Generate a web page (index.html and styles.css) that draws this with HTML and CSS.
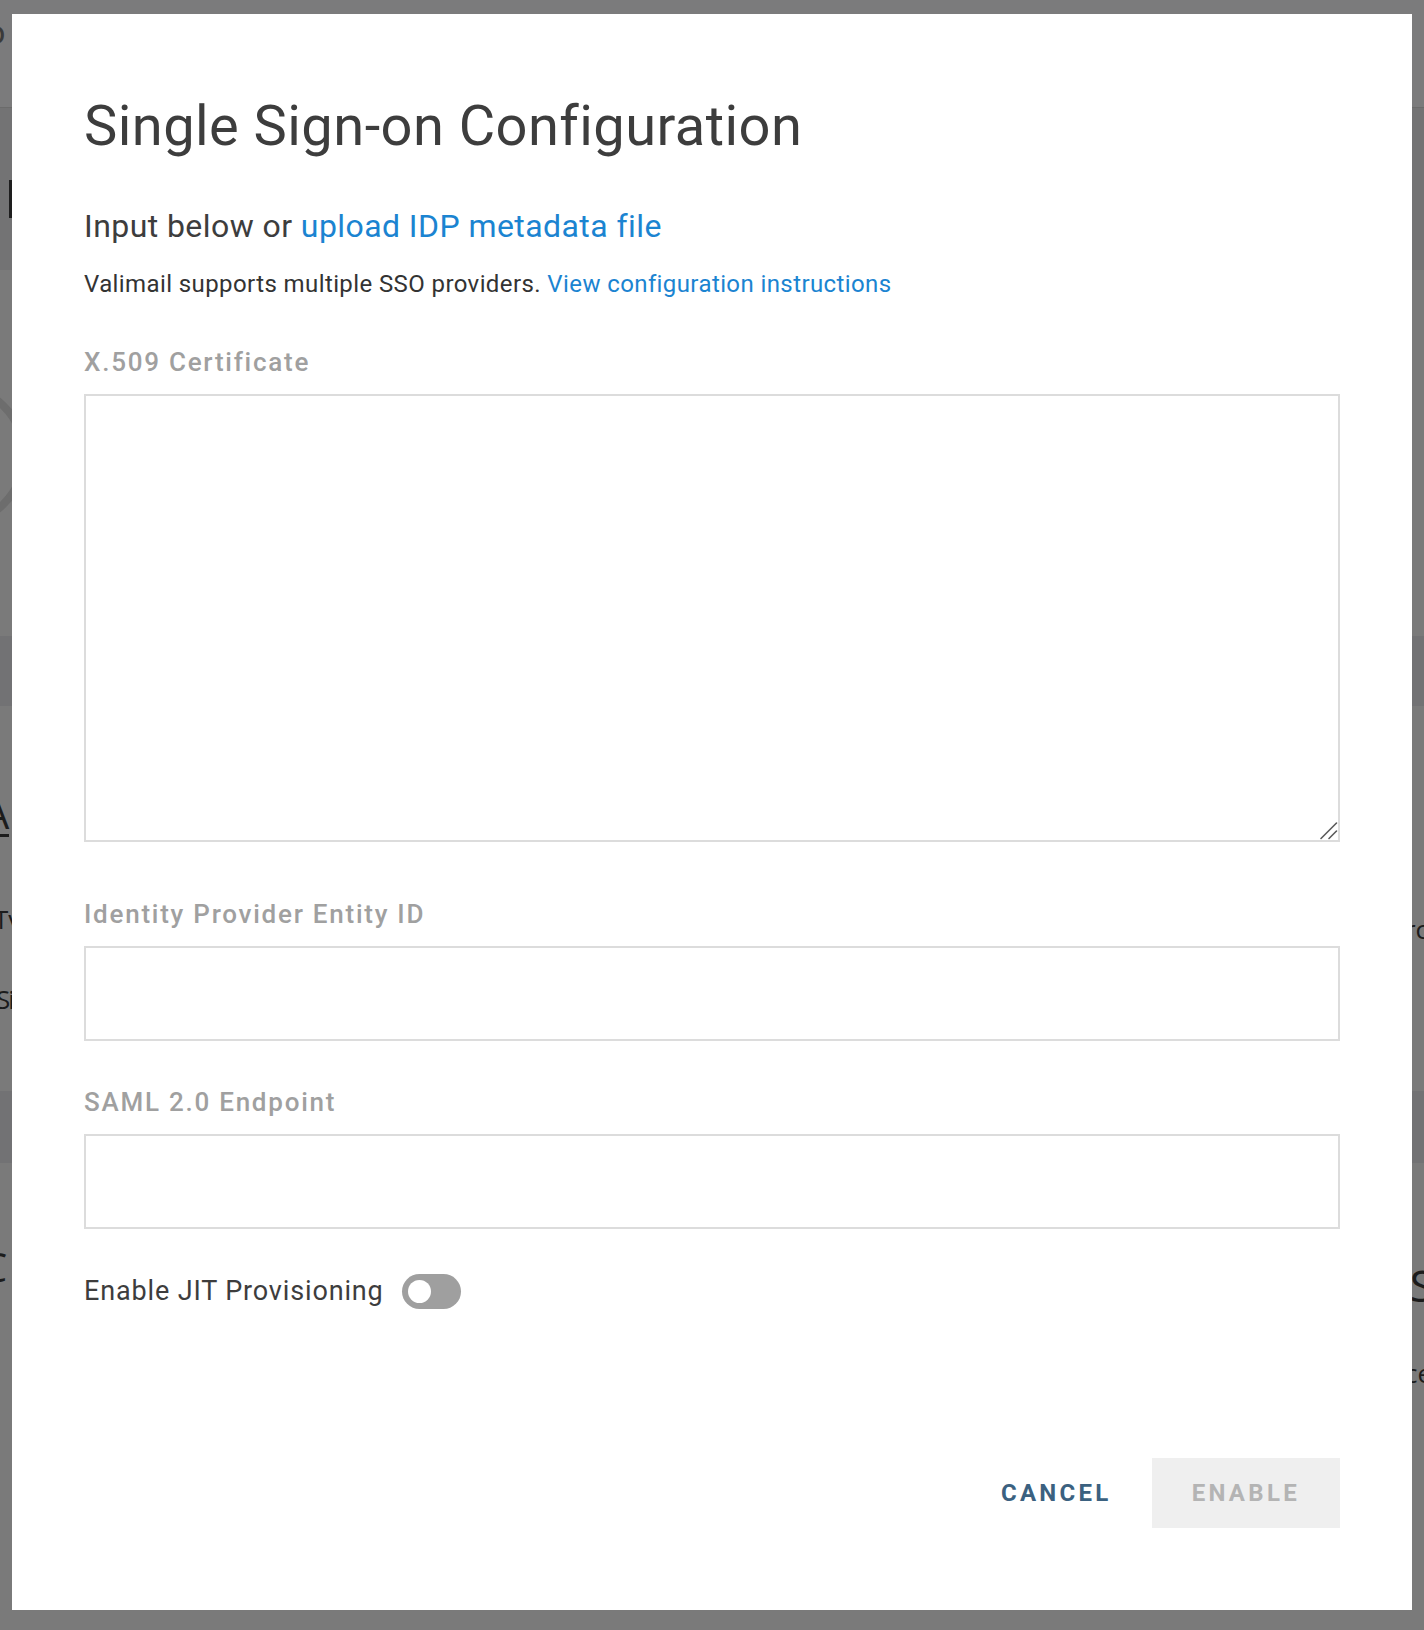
FILE: index.html
```html
<!DOCTYPE html>
<html lang="en">
<head>
<meta charset="utf-8">
<title>Single Sign-on Configuration</title>
<link rel="stylesheet" href="styles.css">
</head>
<body>
<div class="page">
  <header class="pg-head"><span class="pg-logo">o</span></header>
  <section class="pg-band1"><span class="pg-tab"></span></section>
  <section class="pg-main"><span class="pg-ring"></span></section>
  <section class="pg-band2"></section>
  <section class="pg-cols">
    <div class="pg-left">
      <span class="frag frag-a">A</span>
      <span class="frag frag-tv">Tv</span>
      <span class="frag frag-si">Si</span>
    </div>
    <div class="pg-right">
      <span class="frag frag-rc">rc</span>
    </div>
  </section>
  <section class="pg-band3"></section>
  <section class="pg-cols pg-cols2">
    <div class="pg-left"><span class="frag frag-c">C</span></div>
    <div class="pg-right">
      <span class="frag frag-s">S</span>
      <span class="frag frag-ce">ce</span>
    </div>
  </section>
</div>

<div class="overlay">
  <div class="modal" role="dialog" aria-labelledby="sso-title">
    <h1 id="sso-title" class="modal-title">Single Sign-on Configuration</h1>
    <p class="modal-sub">Input below or <a href="#" class="link">upload IDP metadata file</a></p>
    <p class="modal-note">Valimail supports multiple SSO providers. <a href="#" class="link">View configuration instructions</a></p>

    <label class="field-label" for="cert">X.509 Certificate</label>
    <div class="area-wrap">
      <textarea id="cert" class="field-area"></textarea>
      <svg class="grip" width="24" height="24" viewBox="0 0 24 24" aria-hidden="true">
        <line x1="5" y1="20.5" x2="20.5" y2="5" stroke="#5a5a5a" stroke-width="1.6" stroke-linecap="round"/>
        <line x1="13" y1="20.5" x2="20.5" y2="13" stroke="#5a5a5a" stroke-width="1.6" stroke-linecap="round"/>
      </svg>
    </div>

    <label class="field-label field-label-gap" for="entity">Identity Provider Entity ID</label>
    <input id="entity" class="field-input" type="text">

    <label class="field-label field-label-gap2" for="saml">SAML 2.0 Endpoint</label>
    <input id="saml" class="field-input" type="text">

    <div class="jit-row">
      <span class="jit-label">Enable JIT Provisioning</span>
      <span class="toggle"><span class="toggle-knob"></span></span>
    </div>

    <div class="actions">
      <button class="btn btn-cancel" type="button">CANCEL</button>
      <button class="btn btn-enable" type="button" disabled>ENABLE</button>
    </div>
  </div>
</div>
</body>
</html>
```

FILE: styles.css
```css
html, body {
  margin: 0;
  padding: 0;
}

body {
  width: 1424px;
  height: 1630px;
  overflow: hidden;
  background: #7a7a7a;
  font-family: Roboto, "Liberation Sans", Arial, sans-serif;
}

/* ---------- underlying page (dimmed) ---------- */
.page {
  width: 1424px;
  display: flex;
  flex-direction: column;
}

.pg-head {
  height: 108px;
  background: #7b7b7c;
  border-bottom: 1px solid #6b6b6b;
  box-sizing: border-box;
  display: flex;
  align-items: flex-start;
}

.pg-logo {
  margin-left: -14px;
  margin-top: 12px;
  font-size: 34px;
  color: #3a3a3a;
}

.pg-band1 {
  height: 162px;
  background: #737374;
  display: flex;
  align-items: flex-start;
}

.pg-tab {
  display: block;
  width: 3px;
  height: 38px;
  margin-top: 72px;
  margin-left: 9px;
  background: #1e1e1e;
}

.pg-main {
  height: 366px;
  background: #7a7a7a;
  display: flex;
  align-items: flex-start;
}

.pg-ring {
  display: block;
  width: 130px;
  height: 130px;
  margin-top: 112px;
  margin-left: -118px;
  border: 8px solid #6d6d6d;
  border-radius: 50%;
}

.pg-band2 {
  height: 70px;
  background: #727274;
}

.pg-cols {
  height: 385px;
  display: flex;
  justify-content: space-between;
  background: #7a7a7a;
}

.pg-left, .pg-right {
  display: flex;
  flex-direction: column;
  align-items: flex-start;
}

.pg-right {
  align-items: flex-end;
}

.frag {
  color: #1c1c1c;
  font-family: "Open Sans", Roboto, sans-serif;
  line-height: 1;
}

.frag-a {
  margin-top: 88px;
  margin-left: -16px;
  font-size: 40px;
  border-bottom: 3px solid #1c1c1c;
}

.frag-tv {
  margin-top: 69px;
  margin-left: -6px;
  font-size: 26px;
}

.frag-si {
  margin-top: 54px;
  margin-left: -4px;
  font-size: 26px;
  letter-spacing: -2px;
}

.frag-rc {
  margin-top: 210px;
  margin-right: -4px;
  font-size: 26px;
}

.pg-band3 {
  height: 72px;
  background: #727274;
}

.pg-cols2 {
  height: 400px;
}

.frag-c {
  margin-top: 84px;
  margin-left: -18px;
  font-size: 40px;
}

.frag-s {
  margin-top: 100px;
  margin-right: -10px;
  font-size: 44px;
}

.frag-ce {
  margin-top: 53px;
  margin-right: -8px;
  font-size: 26px;
}

/* ---------- modal ---------- */
.overlay {
  position: fixed;
  inset: 0;
}

.modal {
  position: absolute;
  left: 12px;
  top: 14px;
  width: 1400px;
  height: 1596px;
  box-sizing: border-box;
  background: #ffffff;
  padding: 79px 72px 82px;
  display: flex;
  flex-direction: column;
  color: #3d3d3d;
}

.modal-title {
  margin: 0;
  font-size: 56px;
  line-height: 66px;
  font-weight: 400;
  letter-spacing: 0.45px;
  color: #3d3d3d;
}

.modal-sub {
  margin: 48px 0 0;
  font-size: 32px;
  line-height: 38px;
  letter-spacing: 0.43px;
  color: #3d3d3d;
}

.modal-note {
  margin: 25px 0 0;
  font-size: 24px;
  line-height: 28px;
  color: #333333;
  letter-spacing: 0.4px;
}

.link {
  color: #1b84d1;
  text-decoration: none;
}

.field-label {
  display: block;
  margin-top: 49px;
  font-size: 26px;
  line-height: 30px;
  font-weight: 500;
  color: #a0a0a0;
  letter-spacing: 1.75px;
}

.field-label-gap {
  margin-top: 57px;
}

.field-label-gap2 {
  margin-top: 46px;
}

.area-wrap {
  position: relative;
  width: 1256px;
  height: 448px;
  margin-top: 17px;
}

.field-area,
.field-input {
  display: block;
  box-sizing: border-box;
  width: 1256px;
  border: 2px solid #dcdcdc;
  border-radius: 0;
  background: #ffffff;
  font-family: Roboto, "Liberation Sans", sans-serif;
  font-size: 24px;
  padding: 12px 16px;
  outline: none;
}

.field-area {
  height: 448px;
  margin: 0;
  resize: none;
}

.grip {
  position: absolute;
  right: 0;
  bottom: 0;
}

.field-input {
  height: 95px;
  margin-top: 17px;
}

.jit-row {
  margin-top: 45px;
  display: flex;
  align-items: center;
  gap: 18px;
}

.jit-label {
  font-size: 27px;
  line-height: 35px;
  letter-spacing: 0.85px;
  color: #3d3d3d;
}

.toggle {
  display: flex;
  align-items: center;
  width: 59px;
  height: 35px;
  border-radius: 18px;
  background: #9f9f9f;
  box-sizing: border-box;
  padding-left: 6px;
}

.toggle-knob {
  display: block;
  width: 23px;
  height: 23px;
  border-radius: 50%;
  background: #ffffff;
}

.actions {
  margin-top: auto;
  display: flex;
  justify-content: flex-end;
}

.btn {
  height: 70px;
  padding: 0 40px;
  border: none;
  background: transparent;
  font-family: Roboto, "Liberation Sans", sans-serif;
  font-size: 24px;
  font-weight: 700;
  letter-spacing: 3.3px;
  cursor: pointer;
}

.btn-cancel {
  color: #3b6180;
}

.btn-enable {
  background: #efefef;
  color: #b4b4b4;
  cursor: default;
}
```
